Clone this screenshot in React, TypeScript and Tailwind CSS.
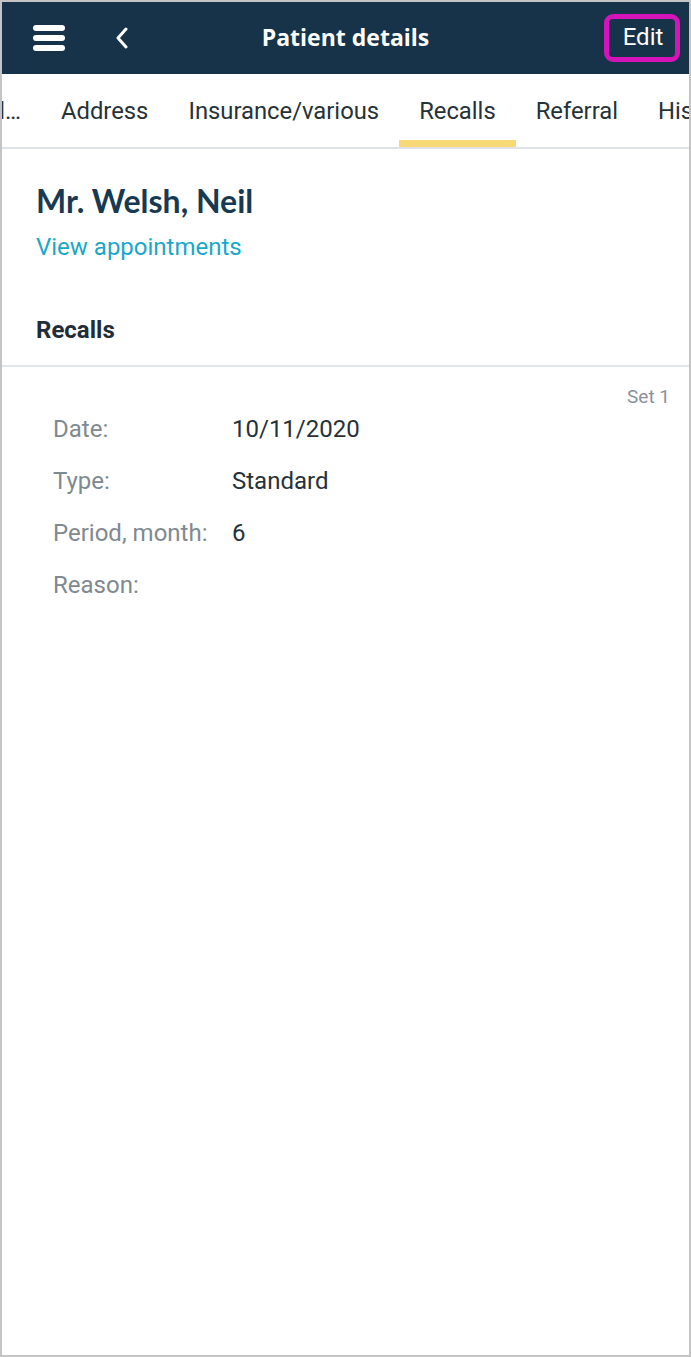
import React from "react";

export default function App() {
  const rows: [string, string][] = [
    ["Date:", "10/11/2020"],
    ["Type:", "Standard"],
    ["Period, month:", "6"],
    ["Reason:", ""],
  ];
  return (
    <div
      className="w-[691px] h-[1357px] border-2 border-[#c4c4c4] bg-white overflow-hidden flex flex-col"
      style={{ fontFamily: "Roboto, 'Liberation Sans', sans-serif" }}
    >
      {/* Header */}
      <div className="h-[72px] bg-[#17334a] flex items-center relative shrink-0">
        <div className="ml-[31px] flex flex-col gap-[4px]">
          <div className="w-[32px] h-[6px] rounded-full bg-white" />
          <div className="w-[32px] h-[6px] rounded-full bg-white" />
          <div className="w-[32px] h-[6px] rounded-full bg-white" />
        </div>
        <svg className="ml-[50px]" width="14" height="22" viewBox="0 0 14 22">
          <path d="M11 2 L3 11 L11 20" fill="none" stroke="white" strokeWidth="3" strokeLinecap="round" strokeLinejoin="round" />
        </svg>
        <div
          className="absolute left-0 right-0 top-0 bottom-0 flex items-center justify-center pointer-events-none text-white text-[23px] font-bold pb-[1px]"
          style={{ fontFamily: "'Open Sans', Lato, sans-serif" }}
        >
          Patient details
        </div>
        <div className="ml-auto mr-[9px] w-[76px] h-[48px] border-[5px] border-[#d413b8] rounded-[9px] flex items-center justify-center text-white text-[24px] pb-[2px] pl-[2px]">
          Edit
        </div>
      </div>

      {/* Tabs */}
      <div className="h-[75px] border-b-2 border-[#dfe3e5] flex items-stretch whitespace-nowrap shrink-0 text-[23.8px] text-[#263238]">
        <div className="w-[39px] shrink-0 overflow-hidden flex justify-end items-center pr-[20px] pt-[3px]">
          <span className="shrink-0">Personal…</span>
        </div>
        {["Address", "Insurance/various", "Recalls", "Referral", "History"].map((t) => (
          <div key={t} className="relative px-5 flex items-center shrink-0 pt-[3px]">
            <span>{t}</span>
            {t === "Recalls" && (
              <div className="absolute left-0 right-0 bottom-0 h-[7px] bg-[#f8d977]" />
            )}
          </div>
        ))}
      </div>

      {/* Patient */}
      <div className="px-[34px] pt-[32px]">
        <div
          className="text-[32px] font-bold text-[#173a52] leading-[40px]"
          style={{ fontFamily: "Lato, 'Open Sans', sans-serif" }}
        >
          Mr. Welsh, Neil
        </div>
        <div className="text-[24px] text-[#19a8c9] leading-[30px] mt-[11px]">View appointments</div>
        <div className="text-[24px] font-bold text-[#1f2d38] mt-[53px] leading-[30px]">Recalls</div>
      </div>
      <div className="h-[2px] bg-[#e3e6e8] mt-[20px]" />

      {/* Set */}
      <div className="pr-[19px] pt-[18px] text-right text-[19px] text-[#8a9299] leading-[24px]">Set 1</div>
      <div className="pl-[51px] flex flex-col">
        {rows.map(([l, v], i) => (
          <div key={l} className={`flex items-center h-[52px] ${i === 0 ? "-mt-[6px]" : ""}`}>
            <div className="w-[179px] text-[24px] text-[#7f8990]">{l}</div>
            <div className="text-[24px] text-[#263238]">{v}</div>
          </div>
        ))}
      </div>
    </div>
  );
}
